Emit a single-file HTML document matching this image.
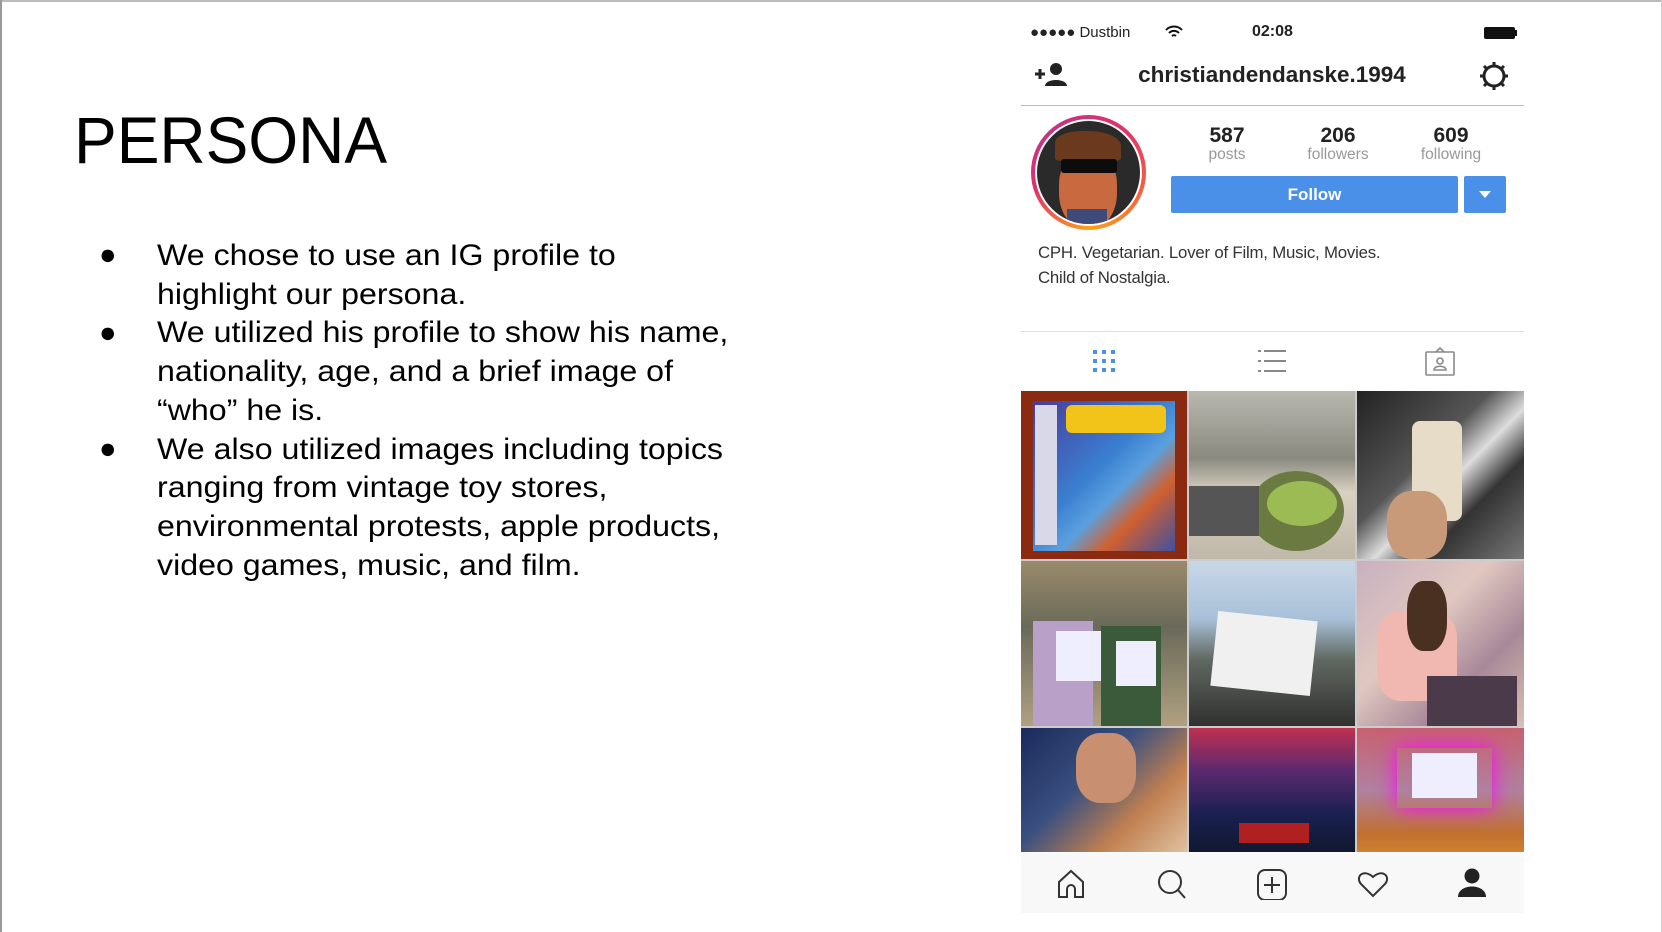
<!DOCTYPE html>
<html><head><meta charset="utf-8"><style>
*{margin:0;padding:0;box-sizing:border-box}
body{width:1662px;height:932px;background:#fff;position:relative;overflow:hidden;font-family:"Liberation Sans",Arial,sans-serif;color:#000}
.a{position:absolute}
.title{left:74px;top:100px;font-size:66px;line-height:80px;transform:scaleX(0.97);transform-origin:left}
.bl{left:157px;font-size:29.5px;line-height:38.7px;width:600px;transform:scaleX(1.09);transform-origin:left}
.bu{left:99px;font-size:29px}
.cell{position:absolute;overflow:hidden}
</style></head><body>
<div class="a" style="left:0;top:0;width:1662px;height:2px;background:#bbb"></div>
<div class="a" style="left:0;top:0;width:2px;height:932px;background:#999"></div>
<div class="a" style="right:0;top:0;width:1px;height:932px;background:#ccc"></div>
<div class="a title">PERSONA</div>
<div class="a bl" style="top:237px">We chose to use an IG profile to<br>highlight our persona.<br>We utilized his profile to show his name,<br>nationality, age, and a brief image of<br>“who” he is.<br>We also utilized images including topics<br>ranging from vintage toy stores,<br>environmental protests, apple products,<br>video games, music, and film.</div>
<div class="a bu" style="top:239px">●</div>
<div class="a bu" style="top:317px">●</div>
<div class="a bu" style="top:433px">●</div>

<!-- phone -->
<div class="a" style="left:1030px;top:24px;font-size:15px;color:#222">●●●●● Dustbin</div>
<svg class="a" style="left:1165px;top:25px" width="18" height="14" viewBox="0 0 18 14"><path d="M1 5a11 11 0 0 1 16 0M4 8a7 7 0 0 1 10 0M7 11a3 3 0 0 1 4 0" fill="none" stroke="#111" stroke-width="2"/></svg>
<div class="a" style="left:1252px;top:23px;font-size:16px;font-weight:bold;color:#222">02:08</div>
<div class="a" style="left:1484px;top:27px;width:31px;height:12px;background:#111;border-radius:2px"></div>
<div class="a" style="left:1515px;top:30px;width:2px;height:6px;background:#111"></div>
<svg class="a" style="left:1034px;top:62px" width="34" height="26" viewBox="0 0 34 26"><path d="M1 12h10M6 7v10" stroke="#222" stroke-width="3"/><circle cx="22" cy="7" r="6" fill="#222"/><path d="M11 24c0-8 22-8 22 0z" fill="#222"/></svg>
<div class="a" style="left:1090px;top:62px;width:364px;text-align:center;font-size:22.5px;font-weight:bold;color:#222">christiandendanske.1994</div>
<svg class="a" style="left:1478px;top:60px" width="32" height="32" viewBox="0 0 32 32"><circle cx="16" cy="16" r="10" fill="none" stroke="#222" stroke-width="3"/><path d="M16 2v5M16 25v5M2 16h5M25 16h5M6 6l3.5 3.5M22.5 22.5L26 26M6 26l3.5-3.5M22.5 9.5L26 6" stroke="#222" stroke-width="3"/></svg>
<div class="a" style="left:1021px;top:105px;width:503px;height:1px;background:#bbb"></div>
<div class="a" style="left:1031px;top:115px;width:115px;height:115px;border-radius:50%;background:conic-gradient(from 180deg,#f9a21b,#e1306c,#c13584,#e1306c,#f56040,#f9a21b)"></div>
<div class="a" style="left:1035px;top:119px;width:107px;height:107px;border-radius:50%;background:#fff"></div>
<div class="a" style="left:1037px;top:121px;width:103px;height:103px;border-radius:50%;background:#2a2a2a;overflow:hidden">
 <div class="a" style="left:22px;top:28px;width:58px;height:80px;border-radius:45%;background:#c8693f"></div>
 <div class="a" style="left:18px;top:10px;width:66px;height:30px;border-radius:40% 50% 10% 10%;background:#6b3a1e"></div>
 <div class="a" style="left:24px;top:38px;width:56px;height:14px;background:#0c0c0c;border-radius:3px"></div>
 <div class="a" style="left:30px;top:88px;width:40px;height:20px;background:#3d4a7a"></div>
</div>
<div class="a" style="left:1187px;top:124px;width:80px;text-align:center;font-size:21px;font-weight:bold;color:#222">587</div>
<div class="a" style="left:1298px;top:124px;width:80px;text-align:center;font-size:21px;font-weight:bold;color:#222">206</div>
<div class="a" style="left:1411px;top:124px;width:80px;text-align:center;font-size:21px;font-weight:bold;color:#222">609</div>
<div class="a" style="left:1187px;top:146px;width:80px;text-align:center;font-size:15.5px;color:#999">posts</div>
<div class="a" style="left:1298px;top:146px;width:80px;text-align:center;font-size:15.5px;color:#999">followers</div>
<div class="a" style="left:1411px;top:146px;width:80px;text-align:center;font-size:15.5px;color:#999">following</div>
<div class="a" style="left:1171px;top:176px;width:287px;height:37px;background:#4a8fe8;border-radius:2px;color:#fff;font-weight:bold;font-size:17px;text-align:center;line-height:37px">Follow</div>
<div class="a" style="left:1464px;top:176px;width:42px;height:37px;background:#4a8fe8;border-radius:2px"></div>
<div class="a" style="left:1479px;top:191px;width:0;height:0;border-left:6px solid transparent;border-right:6px solid transparent;border-top:7px solid #fff"></div>
<div class="a" style="left:1038px;top:240px;font-size:16.8px;line-height:25px;color:#333;letter-spacing:-0.2px">CPH. Vegetarian. Lover of Film, Music, Movies.<br>Child of Nostalgia.</div>
<div class="a" style="left:1021px;top:331px;width:503px;height:1px;background:#ddd"></div>
<svg class="a" style="left:1092px;top:349px" width="24" height="24" viewBox="0 0 24 24" fill="#4a8fe8"><rect x="1" y="1" width="4" height="4"/><rect x="10" y="1" width="4" height="4"/><rect x="19" y="1" width="4" height="4"/><rect x="1" y="10" width="4" height="4"/><rect x="10" y="10" width="4" height="4"/><rect x="19" y="10" width="4" height="4"/><rect x="1" y="19" width="4" height="4"/><rect x="10" y="19" width="4" height="4"/><rect x="19" y="19" width="4" height="4"/></svg>
<svg class="a" style="left:1258px;top:349px" width="28" height="24" viewBox="0 0 28 24" stroke="#888" stroke-width="2"><path d="M0 2h3M6 2h22M0 12h3M6 12h22M0 22h3M6 22h22"/></svg>
<svg class="a" style="left:1424px;top:346px" width="32" height="30" viewBox="0 0 32 30" fill="none" stroke="#888" stroke-width="1.6"><rect x="2" y="6" width="28" height="23" rx="1"/><path d="M12 6l4-4 4 4"/><circle cx="16" cy="15" r="3"/><path d="M10 24c0-5 12-5 12 0z"/></svg>

<!-- grid -->
<div class="a" style="left:1021px;top:391px;width:503px;height:461px;background:#ccc"></div>
<div class="cell" style="left:1021px;top:391px;width:166px;height:168px;background:#8a2a10"><div class="a" style="left:12px;top:10px;width:142px;height:150px;background:linear-gradient(135deg,#4a3a9a,#3a7fd0 45%,#5aa0e0 60%,#d06030 75%,#4050a0)"></div><div class="a" style="left:14px;top:14px;width:22px;height:140px;background:#d8d8e8"></div><div class="a" style="left:45px;top:14px;width:100px;height:28px;background:#f2c41a;border-radius:6px"></div></div>
<div class="cell" style="left:1189px;top:391px;width:166px;height:168px;background:linear-gradient(180deg,#b8b8b0 0,#8a8a80 40%,#d8d0c0 60%,#bfb8a8 100%)"><div class="a" style="left:60px;top:80px;width:95px;height:80px;border-radius:50%;background:#6a7a40"></div><div class="a" style="left:78px;top:90px;width:70px;height:45px;border-radius:50%;background:#9cbb55"></div><div class="a" style="left:0;top:95px;width:70px;height:50px;background:#555"></div></div>
<div class="cell" style="left:1357px;top:391px;width:167px;height:168px;background:linear-gradient(135deg,#222 0,#555 40%,#ddd 55%,#333 70%,#777)"><div class="a" style="left:55px;top:30px;width:50px;height:100px;background:#e6dcc8;border-radius:8px"></div><div class="a" style="left:30px;top:100px;width:60px;height:68px;background:#c89a7a;border-radius:40%"></div></div>
<div class="cell" style="left:1021px;top:561px;width:166px;height:165px;background:linear-gradient(180deg,#9a8a6a,#6a6a5a 40%,#b0a080)"><div class="a" style="left:12px;top:60px;width:60px;height:105px;background:#b9a0c8"></div><div class="a" style="left:80px;top:65px;width:60px;height:100px;background:#3a5a3a"></div><div class="a" style="left:35px;top:70px;width:45px;height:50px;background:#eef"></div><div class="a" style="left:95px;top:80px;width:40px;height:45px;background:#eef"></div></div>
<div class="cell" style="left:1189px;top:561px;width:166px;height:165px;background:linear-gradient(180deg,#c8d8e8 0,#a8c0d8 35%,#606860 60%,#303030)"><div class="a" style="left:25px;top:55px;width:100px;height:75px;background:#f0f0f0;transform:rotate(6deg)"></div></div>
<div class="cell" style="left:1357px;top:561px;width:167px;height:165px;background:linear-gradient(135deg,#c8b0c0,#e0c8c0 40%,#a88898 70%,#d8c0b0)"><div class="a" style="left:20px;top:50px;width:80px;height:90px;background:#f0b8b0;border-radius:30%"></div><div class="a" style="left:50px;top:20px;width:40px;height:70px;background:#4a3020;border-radius:40%"></div><div class="a" style="left:70px;top:115px;width:90px;height:50px;background:#4a3a4a"></div></div>
<div class="cell" style="left:1021px;top:728px;width:166px;height:124px;background:linear-gradient(135deg,#1a2a5a,#3a5080 40%,#c08050 70%,#e0c0a0)"><div class="a" style="left:55px;top:5px;width:60px;height:70px;background:#c89070;border-radius:40%"></div></div>
<div class="cell" style="left:1189px;top:728px;width:166px;height:124px;background:linear-gradient(180deg,#c03050 0,#5a2a70 35%,#1a2050 70%,#101830)"><div class="a" style="left:50px;top:95px;width:70px;height:20px;background:#b02020"></div></div>
<div class="cell" style="left:1357px;top:728px;width:167px;height:124px;background:linear-gradient(180deg,#c86070,#b080a0 50%,#c07030 85%,#d08030)"><div class="a" style="left:55px;top:25px;width:65px;height:45px;background:#eef"></div><div class="a" style="left:40px;top:20px;width:95px;height:60px;box-shadow:0 0 20px #f0f;"></div></div>

<!-- bottom bar -->
<div class="a" style="left:1021px;top:853px;width:503px;height:60px;background:#f8f8f8"></div>
<svg class="a" style="left:1056px;top:869px" width="30" height="30" viewBox="0 0 30 30" fill="none" stroke="#333" stroke-width="2"><path d="M3 28V13L15 2l12 11v15h-8v-8a4 4 0 0 0-8 0v8z"/></svg>
<svg class="a" style="left:1157px;top:869px" width="30" height="30" viewBox="0 0 30 30" fill="none" stroke="#333" stroke-width="2"><circle cx="13" cy="13" r="11"/><path d="M21 21l7 8"/></svg>
<svg class="a" style="left:1256px;top:868px" width="32" height="32" viewBox="0 0 32 32" fill="none" stroke="#333" stroke-width="2"><rect x="2" y="2" width="28" height="30" rx="7"/><path d="M16 9v16M8 17h16"/></svg>
<svg class="a" style="left:1357px;top:870px" width="32" height="28" viewBox="0 0 32 28" fill="none" stroke="#333" stroke-width="2"><path d="M16 26L4 14C-2 7 6-2 16 7c10-9 18 0 12 7z"/></svg>
<svg class="a" style="left:1458px;top:868px" width="28" height="30" viewBox="0 0 28 30" fill="#222"><circle cx="14" cy="8" r="7.5"/><path d="M0 29c0-14 28-14 28 0z"/></svg>
</body></html>
